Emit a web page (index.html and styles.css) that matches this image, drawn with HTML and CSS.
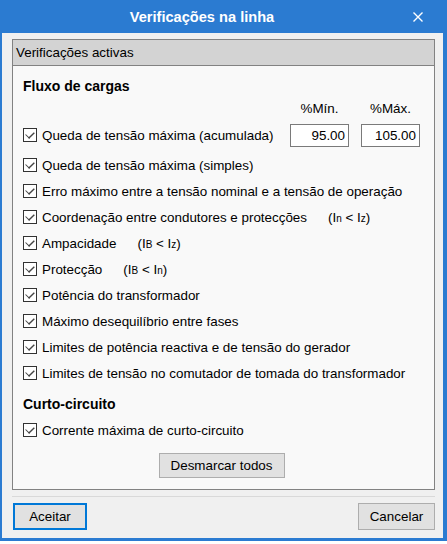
FILE: index.html
```html
<!DOCTYPE html>
<html lang="pt">
<head>
    <meta charset="UTF-8">
    <title>Verificações na linha</title>
    <link rel="stylesheet" href="styles.css">
</head>
<body>
<div class="window">
    <div class="titlebar">
        <div class="title">Verificações na linha</div>
        <div class="close">
            <svg width="10" height="10" viewBox="0 0 10 10"><path d="M0.5 0.5L9.5 9.5M9.5 0.5L0.5 9.5" stroke="#fff" stroke-width="1.4"/></svg>
        </div>
    </div>
    <div class="client">
        <div class="group">
            <div class="group-head">Verificações activas</div>
            <div class="group-body">
                <div class="heading">Fluxo de cargas</div>
                <div class="cols">
                    <span>%Mín.</span>
                    <span>%Máx.</span>
                </div>
                <div class="row first">
                    <span class="check"></span>
                    <span class="label">Queda de tensão máxima (acumulada)</span>
                    <div class="inputs">
                        <div class="field">95.00</div>
                        <div class="field">105.00</div>
                    </div>
                </div>
                <div class="row"><span class="check"></span><span>Queda de tensão máxima (simples)</span></div>
                <div class="row"><span class="check"></span><span>Erro máximo entre a tensão nominal e a tensão de operação</span></div>
                <div class="row"><span class="check"></span><span>Coordenação entre condutores e protecções</span><span class="formula">(I<small>n</small> &lt; I<small>z</small>)</span></div>
                <div class="row"><span class="check"></span><span>Ampacidade</span><span class="formula">(I<small>B</small> &lt; I<small>z</small>)</span></div>
                <div class="row"><span class="check"></span><span>Protecção</span><span class="formula">(I<small>B</small> &lt; I<small>n</small>)</span></div>
                <div class="row"><span class="check"></span><span>Potência do transformador</span></div>
                <div class="row"><span class="check"></span><span>Máximo desequilíbrio entre fases</span></div>
                <div class="row"><span class="check"></span><span>Limites de potência reactiva e de tensão do gerador</span></div>
                <div class="row"><span class="check"></span><span>Limites de tensão no comutador de tomada do transformador</span></div>
                <div class="heading second">Curto-circuito</div>
                <div class="row"><span class="check"></span><span>Corrente máxima de curto-circuito</span></div>
                <div class="center">
                    <button class="btn wide">Desmarcar todos</button>
                </div>
            </div>
        </div>
        <div class="footer">
            <button class="btn default">Aceitar</button>
            <button class="btn cancel">Cancelar</button>
        </div>
    </div>
</div>
</body>
</html>
```

FILE: styles.css
```css
*{
    margin: 0;
    padding: 0;
    box-sizing: border-box;
}
body{
    background: #fff;
    font-family: "Liberation Sans", Arial, sans-serif;
    font-size: 13.4px;
    color: #000;
}
.window{
    width: 447px;
    height: 541px;
    background: #2b7bd1;
    padding: 0 4px 3px 2px;
    display: flex;
    flex-direction: column;
}
.titlebar{
    display: flex;
    align-items: center;
    height: 33px;
    color: #fff;
}
.title{
    flex: 1;
    text-align: center;
    font-weight: bold;
    font-size: 14.6px;
    padding-left: 2px;
}
.close{
    width: 36px;
    margin-right: 7px;
    display: flex;
    justify-content: center;
    align-items: center;
}
.client{
    flex: 1;
    background: #f0f0f0;
    padding: 6px 8px 0 10px;
    display: flex;
    flex-direction: column;
}
.group{
    height: 451px;
    border: 1px solid #828282;
    display: flex;
    flex-direction: column;
}
.group-head{
    height: 26px;
    line-height: 25px;
    background: #d3d3d3;
    border-bottom: 1px solid #828282;
    padding-left: 3px;
}
.group-body{
    flex: 1;
    background: #f9f9f9;
    padding: 10px 14px 0 10px;
}
.heading{
    font-weight: bold;
    font-size: 14px;
    height: 20px;
    line-height: 20px;
}
.heading.second{
    margin-top: 8px;
    margin-bottom: 3px;
}
.cols{
    display: flex;
    justify-content: flex-end;
    gap: 12px;
    height: 22px;
    line-height: 22px;
    margin-top: 2px;
}
.cols span{
    width: 59px;
    text-align: center;
}
.row{
    display: flex;
    align-items: center;
    height: 26px;
}
.row.first{
    height: 30px;
    margin-bottom: 2px;
}
.row .label{
    flex: 1;
}
.check{
    width: 14px;
    height: 14px;
    border: 1px solid #333;
    background: #fff;
    margin-right: 5px;
    position: relative;
    flex-shrink: 0;
}
.check::after{
    content: "";
    position: absolute;
    left: 4px;
    top: 1px;
    width: 3px;
    height: 7px;
    border-right: 1px solid #444;
    border-bottom: 1px solid #444;
    transform: rotate(45deg) scaleX(1.4);
}
.formula{
    margin-left: 21px;
}
.formula small{
    font-size: 10px;
}
.inputs{
    display: flex;
    gap: 12px;
}
.field{
    width: 59px;
    height: 23px;
    border: 1px solid #7a7a7a;
    background: #fff;
    text-align: right;
    padding-right: 3px;
    line-height: 21px;
}
.center{
    display: flex;
    justify-content: center;
    margin-top: 10px;
}
.btn{
    font-family: "Liberation Sans", Arial, sans-serif;
    font-size: 13.4px;
    color: #000;
    background: #e1e1e1;
    border: 1px solid #adadad;
}
.btn.wide{
    width: 126px;
    height: 25px;
}
.footer{
    margin-top: 6px;
    border-top: 1px solid #d9d9d9;
    display: flex;
    justify-content: space-between;
    padding: 6px 0 0 1px;
}
.btn.default{
    width: 74px;
    height: 27px;
    border: 2px solid #0078d7;
}
.btn.cancel{
    width: 77px;
    height: 27px;
}
```
